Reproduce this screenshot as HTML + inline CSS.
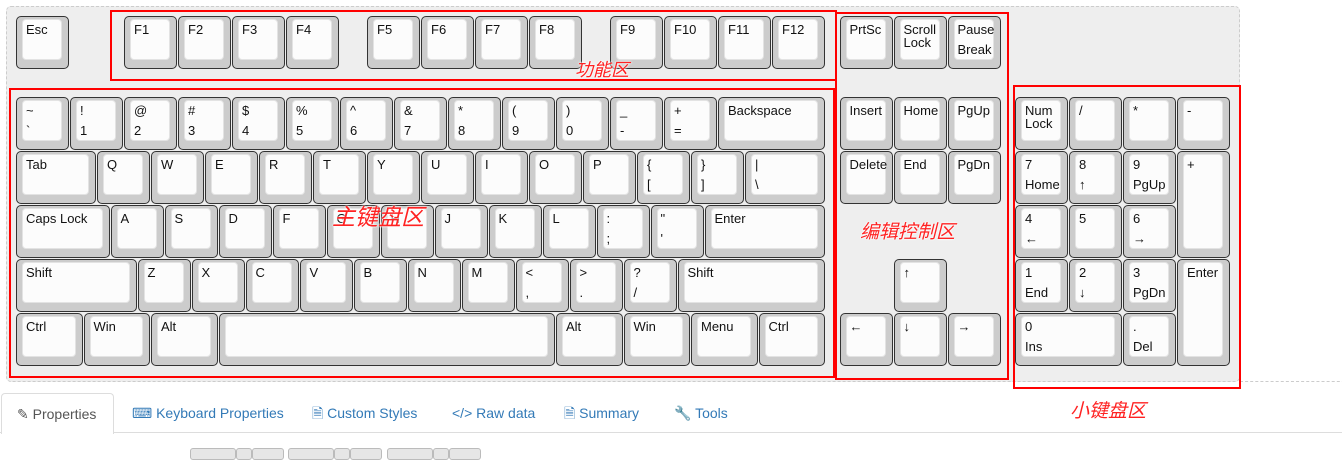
<!DOCTYPE html>
<html><head><meta charset="utf-8"><style>
*{box-sizing:border-box;margin:0;padding:0}
body{width:1342px;height:455px;overflow:hidden;background:#fff;font-family:"Liberation Sans",Helvetica,Arial,sans-serif;position:relative}
#kb{position:absolute;left:6px;top:6px;width:1234px;height:376px;background:#eee;border:1px dashed #ccc;border-radius:5px}
.dl{position:absolute;left:1240px;top:381px;width:110px;border-top:1px dashed #ccc}
.k{position:absolute;left:calc(16px + var(--x)*54px);top:calc(16px + var(--y)*54px);width:calc(var(--w,1)*54px - 1px);height:calc(var(--h,1)*54px - 1px);background:#ccc;border:1px solid #333;border-radius:5px}
.i{position:absolute;left:5px;top:2px;right:6px;bottom:8px;background:#fcfcfc;border:1px solid #e3e3e3;border-radius:4px;font-size:13px;color:#111;padding:3px 3px;line-height:13px}
.b{position:absolute;left:3px;bottom:3px}
.r{position:absolute;border:2px solid #f00}
.lb{position:absolute;color:#f22;font-style:italic;font-family:"Noto Sans CJK SC",sans-serif;text-shadow:0 0 2px #fff,0 0 2px #fff}
.tab{position:absolute;top:393px;height:40px;font-size:14px;color:#337ab7;line-height:40px}
.bt{position:absolute;top:448px;height:12px;background:#e6e6e6;border:1px solid #bbb;border-radius:3px}
</style></head><body>
<div id="kb"></div><div class="dl"></div>
<!-- row 0 -->
<div class="k" style="--x:0;--y:0"><div class="i">Esc</div></div>
<div class="k" style="--x:2;--y:0"><div class="i">F1</div></div>
<div class="k" style="--x:3;--y:0"><div class="i">F2</div></div>
<div class="k" style="--x:4;--y:0"><div class="i">F3</div></div>
<div class="k" style="--x:5;--y:0"><div class="i">F4</div></div>
<div class="k" style="--x:6.5;--y:0"><div class="i">F5</div></div>
<div class="k" style="--x:7.5;--y:0"><div class="i">F6</div></div>
<div class="k" style="--x:8.5;--y:0"><div class="i">F7</div></div>
<div class="k" style="--x:9.5;--y:0"><div class="i">F8</div></div>
<div class="k" style="--x:11;--y:0"><div class="i">F9</div></div>
<div class="k" style="--x:12;--y:0"><div class="i">F10</div></div>
<div class="k" style="--x:13;--y:0"><div class="i">F11</div></div>
<div class="k" style="--x:14;--y:0"><div class="i">F12</div></div>
<div class="k" style="--x:15.25;--y:0"><div class="i">PrtSc</div></div>
<div class="k" style="--x:16.25;--y:0"><div class="i">Scroll<br>Lock</div></div>
<div class="k" style="--x:17.25;--y:0"><div class="i">Pause<div class="b">Break</div></div></div>
<!-- row 1 -->
<div class="k" style="--x:0;--y:1.5"><div class="i">~<div class="b">`</div></div></div>
<div class="k" style="--x:1;--y:1.5"><div class="i">!<div class="b">1</div></div></div>
<div class="k" style="--x:2;--y:1.5"><div class="i">@<div class="b">2</div></div></div>
<div class="k" style="--x:3;--y:1.5"><div class="i">#<div class="b">3</div></div></div>
<div class="k" style="--x:4;--y:1.5"><div class="i">$<div class="b">4</div></div></div>
<div class="k" style="--x:5;--y:1.5"><div class="i">%<div class="b">5</div></div></div>
<div class="k" style="--x:6;--y:1.5"><div class="i">^<div class="b">6</div></div></div>
<div class="k" style="--x:7;--y:1.5"><div class="i">&amp;<div class="b">7</div></div></div>
<div class="k" style="--x:8;--y:1.5"><div class="i">*<div class="b">8</div></div></div>
<div class="k" style="--x:9;--y:1.5"><div class="i">(<div class="b">9</div></div></div>
<div class="k" style="--x:10;--y:1.5"><div class="i">)<div class="b">0</div></div></div>
<div class="k" style="--x:11;--y:1.5"><div class="i">_<div class="b">-</div></div></div>
<div class="k" style="--x:12;--y:1.5"><div class="i">+<div class="b">=</div></div></div>
<div class="k" style="--x:13;--y:1.5;--w:2"><div class="i">Backspace</div></div>
<!-- row 2 -->
<div class="k" style="--x:0;--y:2.5;--w:1.5"><div class="i">Tab</div></div>
<div class="k" style="--x:1.5;--y:2.5"><div class="i">Q</div></div>
<div class="k" style="--x:2.5;--y:2.5"><div class="i">W</div></div>
<div class="k" style="--x:3.5;--y:2.5"><div class="i">E</div></div>
<div class="k" style="--x:4.5;--y:2.5"><div class="i">R</div></div>
<div class="k" style="--x:5.5;--y:2.5"><div class="i">T</div></div>
<div class="k" style="--x:6.5;--y:2.5"><div class="i">Y</div></div>
<div class="k" style="--x:7.5;--y:2.5"><div class="i">U</div></div>
<div class="k" style="--x:8.5;--y:2.5"><div class="i">I</div></div>
<div class="k" style="--x:9.5;--y:2.5"><div class="i">O</div></div>
<div class="k" style="--x:10.5;--y:2.5"><div class="i">P</div></div>
<div class="k" style="--x:11.5;--y:2.5"><div class="i">{<div class="b">[</div></div></div>
<div class="k" style="--x:12.5;--y:2.5"><div class="i">}<div class="b">]</div></div></div>
<div class="k" style="--x:13.5;--y:2.5;--w:1.5"><div class="i">|<div class="b">\</div></div></div>
<!-- row 3 -->
<div class="k" style="--x:0;--y:3.5;--w:1.75"><div class="i">Caps Lock</div></div>
<div class="k" style="--x:1.75;--y:3.5"><div class="i">A</div></div>
<div class="k" style="--x:2.75;--y:3.5"><div class="i">S</div></div>
<div class="k" style="--x:3.75;--y:3.5"><div class="i">D</div></div>
<div class="k" style="--x:4.75;--y:3.5"><div class="i">F</div></div>
<div class="k" style="--x:5.75;--y:3.5"><div class="i">G</div></div>
<div class="k" style="--x:6.75;--y:3.5"><div class="i">H</div></div>
<div class="k" style="--x:7.75;--y:3.5"><div class="i">J</div></div>
<div class="k" style="--x:8.75;--y:3.5"><div class="i">K</div></div>
<div class="k" style="--x:9.75;--y:3.5"><div class="i">L</div></div>
<div class="k" style="--x:10.75;--y:3.5"><div class="i">:<div class="b">;</div></div></div>
<div class="k" style="--x:11.75;--y:3.5"><div class="i">"<div class="b">'</div></div></div>
<div class="k" style="--x:12.75;--y:3.5;--w:2.25"><div class="i">Enter</div></div>
<!-- row 4 -->
<div class="k" style="--x:0;--y:4.5;--w:2.25"><div class="i">Shift</div></div>
<div class="k" style="--x:2.25;--y:4.5"><div class="i">Z</div></div>
<div class="k" style="--x:3.25;--y:4.5"><div class="i">X</div></div>
<div class="k" style="--x:4.25;--y:4.5"><div class="i">C</div></div>
<div class="k" style="--x:5.25;--y:4.5"><div class="i">V</div></div>
<div class="k" style="--x:6.25;--y:4.5"><div class="i">B</div></div>
<div class="k" style="--x:7.25;--y:4.5"><div class="i">N</div></div>
<div class="k" style="--x:8.25;--y:4.5"><div class="i">M</div></div>
<div class="k" style="--x:9.25;--y:4.5"><div class="i">&lt;<div class="b">,</div></div></div>
<div class="k" style="--x:10.25;--y:4.5"><div class="i">&gt;<div class="b">.</div></div></div>
<div class="k" style="--x:11.25;--y:4.5"><div class="i">?<div class="b">/</div></div></div>
<div class="k" style="--x:12.25;--y:4.5;--w:2.75"><div class="i">Shift</div></div>
<!-- row 5 -->
<div class="k" style="--x:0;--y:5.5;--w:1.25"><div class="i">Ctrl</div></div>
<div class="k" style="--x:1.25;--y:5.5;--w:1.25"><div class="i">Win</div></div>
<div class="k" style="--x:2.5;--y:5.5;--w:1.25"><div class="i">Alt</div></div>
<div class="k" style="--x:3.75;--y:5.5;--w:6.25"><div class="i"></div></div>
<div class="k" style="--x:10;--y:5.5;--w:1.25"><div class="i">Alt</div></div>
<div class="k" style="--x:11.25;--y:5.5;--w:1.25"><div class="i">Win</div></div>
<div class="k" style="--x:12.5;--y:5.5;--w:1.25"><div class="i">Menu</div></div>
<div class="k" style="--x:13.75;--y:5.5;--w:1.25"><div class="i">Ctrl</div></div>
<!-- edit -->
<div class="k" style="--x:15.25;--y:1.5"><div class="i">Insert</div></div>
<div class="k" style="--x:16.25;--y:1.5"><div class="i">Home</div></div>
<div class="k" style="--x:17.25;--y:1.5"><div class="i">PgUp</div></div>
<div class="k" style="--x:15.25;--y:2.5"><div class="i">Delete</div></div>
<div class="k" style="--x:16.25;--y:2.5"><div class="i">End</div></div>
<div class="k" style="--x:17.25;--y:2.5"><div class="i">PgDn</div></div>
<div class="k" style="--x:16.25;--y:4.5"><div class="i">↑</div></div>
<div class="k" style="--x:15.25;--y:5.5"><div class="i">←</div></div>
<div class="k" style="--x:16.25;--y:5.5"><div class="i">↓</div></div>
<div class="k" style="--x:17.25;--y:5.5"><div class="i">→</div></div>
<!-- numpad -->
<div class="k" style="--x:18.5;--y:1.5"><div class="i">Num<br>Lock</div></div>
<div class="k" style="--x:19.5;--y:1.5"><div class="i">/</div></div>
<div class="k" style="--x:20.5;--y:1.5"><div class="i">*</div></div>
<div class="k" style="--x:21.5;--y:1.5"><div class="i">-</div></div>
<div class="k" style="--x:18.5;--y:2.5"><div class="i">7<div class="b">Home</div></div></div>
<div class="k" style="--x:19.5;--y:2.5"><div class="i">8<div class="b">↑</div></div></div>
<div class="k" style="--x:20.5;--y:2.5"><div class="i">9<div class="b">PgUp</div></div></div>
<div class="k" style="--x:21.5;--y:2.5;--h:2"><div class="i">+</div></div>
<div class="k" style="--x:18.5;--y:3.5"><div class="i">4<div class="b">←</div></div></div>
<div class="k" style="--x:19.5;--y:3.5"><div class="i">5</div></div>
<div class="k" style="--x:20.5;--y:3.5"><div class="i">6<div class="b">→</div></div></div>
<div class="k" style="--x:18.5;--y:4.5"><div class="i">1<div class="b">End</div></div></div>
<div class="k" style="--x:19.5;--y:4.5"><div class="i">2<div class="b">↓</div></div></div>
<div class="k" style="--x:20.5;--y:4.5"><div class="i">3<div class="b">PgDn</div></div></div>
<div class="k" style="--x:21.5;--y:4.5;--h:2"><div class="i">Enter</div></div>
<div class="k" style="--x:18.5;--y:5.5;--w:2"><div class="i">0<div class="b">Ins</div></div></div>
<div class="k" style="--x:20.5;--y:5.5"><div class="i">.<div class="b">Del</div></div></div>
<!-- red boxes -->
<div class="r" style="left:110px;top:10px;width:727px;height:71px"></div>
<div class="r" style="left:9px;top:88px;width:826px;height:290px"></div>
<div class="r" style="left:835px;top:12px;width:174px;height:368px"></div>
<div class="r" style="left:1013px;top:85px;width:228px;height:304px"></div>
<div class="lb" style="left:575px;top:56px;font-size:18px">功能区</div>
<div class="lb" style="left:332px;top:198px;font-size:23px">主键盘区</div>
<div class="lb" style="left:860px;top:217px;font-size:19px">编辑控制区</div>
<div class="lb" style="left:1070px;top:396px;font-size:19px">小键盘区</div>
<!-- tabs -->
<div style="position:absolute;left:0;top:432px;width:1342px;border-top:1px solid #ddd"></div>
<div class="tab" style="left:1px;width:113px;height:41px;background:#fff;border:1px solid #ddd;border-bottom:none;border-radius:4px 4px 0 0;color:#555;padding-left:15px">✎ Properties</div>
<div class="tab" style="left:132px">⌨ Keyboard Properties</div>
<div class="tab" style="left:312px">🗎 Custom Styles</div>
<div class="tab" style="left:452px">&lt;/&gt; Raw data</div>
<div class="tab" style="left:564px">🗎 Summary</div>
<div class="tab" style="left:674px">🔧 Tools</div>
<div class="bt" style="left:190px;width:46px"></div>
<div class="bt" style="left:236px;width:16px"></div>
<div class="bt" style="left:252px;width:32px"></div>
<div class="bt" style="left:288px;width:46px"></div>
<div class="bt" style="left:334px;width:16px"></div>
<div class="bt" style="left:350px;width:32px"></div>
<div class="bt" style="left:387px;width:46px"></div>
<div class="bt" style="left:433px;width:16px"></div>
<div class="bt" style="left:449px;width:32px"></div>
</body></html>
